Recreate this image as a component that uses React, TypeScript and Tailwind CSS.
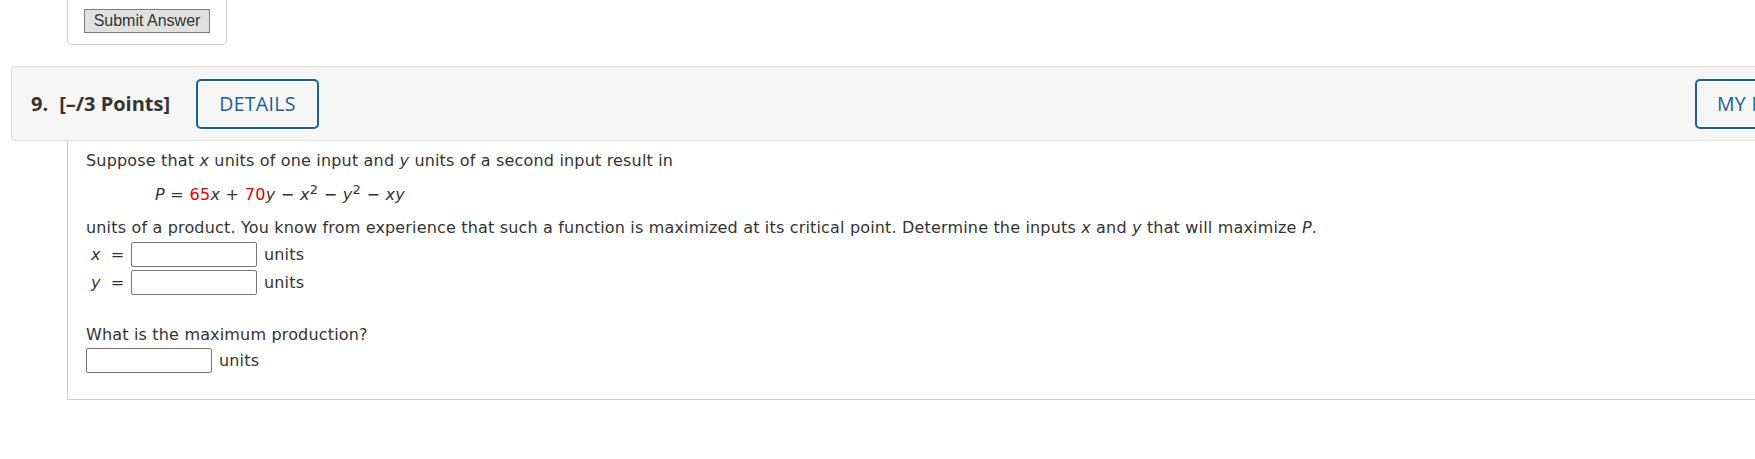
import React from 'react'

const AnswerBox: React.FC<{ label?: React.ReactNode }> = ({ label }) => (
  <div className="flex h-[25px] items-center">
    {label}
    <input
      type="text"
      className="h-[25px] w-[126px] rounded-[2px] border border-[#767676] bg-white px-1 outline-none"
    />
    <span className="ml-[7px]">units</span>
  </div>
)

const Var: React.FC<{ children: React.ReactNode }> = ({ children }) => (
  <span className="italic">{children}</span>
)

const Num: React.FC<{ children: React.ReactNode }> = ({ children }) => (
  <span className="text-[#e60000]">{children}</span>
)

export default function App() {
  return (
    <div className="h-[459px] w-full overflow-hidden bg-white">
      <div className="w-[1866px] pl-[11px]">
        {/* previous question's submit area */}
        <div className="-mt-[10px] ml-[56px] w-[160px] rounded-[5px] border border-[#cfcfcf] pb-[11px] pl-[16px] pt-[17px]">
          <button className="h-[24px] w-[126px] border border-[#7a7a7a] bg-[#e1e1e1] font-['Liberation_Sans',Arial,sans-serif] text-[16px] leading-none text-[#333]">
            Submit Answer
          </button>
        </div>

        {/* question header */}
        <div className="mt-[21px] flex h-[75px] w-[1844px] items-center rounded-[3px] border border-[#dcdcdc] bg-[#f6f6f6] font-['Open_Sans',sans-serif]">
          <div className="w-[184px] pl-[19px] text-[20px] font-bold text-[#333]">
            <span>9.</span>
            <span className="ml-[11px]">[–/3 Points]</span>
          </div>
          <button className="h-[50px] w-[123px] rounded-[5px] border-2 border-[#1a6095] text-[19.5px] font-medium tracking-[0.3px] text-[#1a6095]">
            DETAILS
          </button>
          <button className="ml-auto mr-[19px] h-[50px] w-[140px] rounded-[5px] border-2 border-[#1a6095] pl-[20px] text-left text-[19.5px] font-medium tracking-[0.3px] text-[#1a6095]">
            MY NOTES
          </button>
        </div>

        {/* question body */}
        <div className="ml-[56px] border-b border-l border-[#cccccc] pb-[26px] pl-[18px] pt-[8px] font-['DejaVu_Sans',Verdana,sans-serif] text-[16px] leading-[24px] tracking-[0.17px] text-[#333]">
          <p>
            Suppose that <Var>x</Var> units of one input and <Var>y</Var> units of a second input result in
          </p>
          <p className="mt-[10px] pl-[69px] tracking-[0.3px]">
            <Var>P</Var> = <Num>65</Num>
            <Var>x</Var> + <Num>70</Num>
            <Var>y</Var> − <Var>x</Var>
            <sup className="text-[13px]">2</sup> − <Var>y</Var>
            <sup className="text-[13px]">2</sup> − <Var>xy</Var>
          </p>
          <p className="mt-[9px]">
            units of a product. You know from experience that such a function is maximized at its critical point. Determine
            the inputs <Var>x</Var> and <Var>y</Var> that will maximize <Var>P</Var>.
          </p>
          <div className="mt-[2px] flex flex-col gap-[3px]">
            <AnswerBox
              label={
                <span className="flex w-[45px] pl-[5px]">
                  <Var>x</Var>
                  <span className="ml-[10px]">=</span>
                </span>
              }
            />
            <AnswerBox
              label={
                <span className="flex w-[45px] pl-[5px]">
                  <Var>y</Var>
                  <span className="ml-[10px]">=</span>
                </span>
              }
            />
          </div>
          <p className="mt-[28px]">What is the maximum production?</p>
          <div className="mt-[1px]">
            <AnswerBox />
          </div>
        </div>
      </div>
    </div>
  )
}
